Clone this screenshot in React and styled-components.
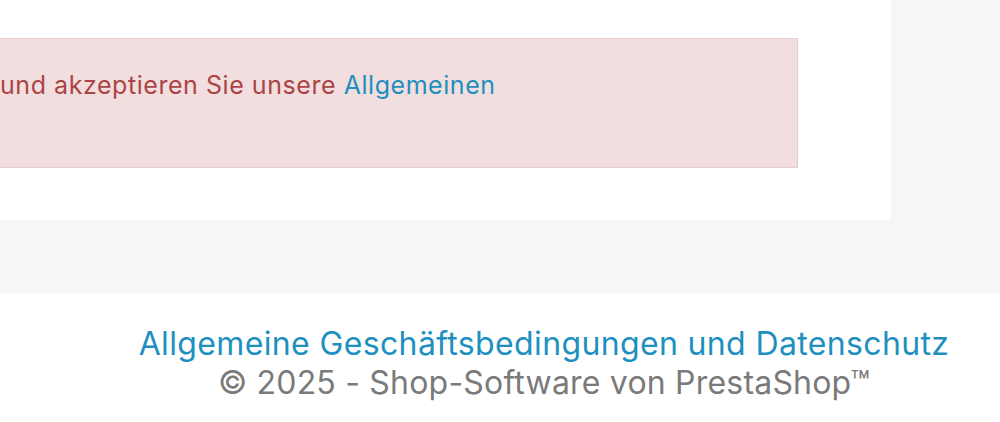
import React from 'react';
import styled, { createGlobalStyle } from 'styled-components';

const GlobalStyle = createGlobalStyle`
  html, body {
    margin: 0;
    padding: 0;
    background: #f6f6f6;
    font-family: Inter, 'Open Sans', sans-serif;
    overflow: hidden;
  }
`;

const Page = styled.div`
  width: 1000px;
  height: 422px;
  display: flex;
  flex-direction: column;
`;

const Wrapper = styled.div`
  height: 293px;
  background: #f6f6f6;
`;

const Panel = styled.section`
  width: 891px;
  height: 220px;
  background: #fff;
  padding-top: 38px;
  box-sizing: border-box;
`;

const Alert = styled.div`
  width: 798px;
  height: 130px;
  box-sizing: border-box;
  background: #f2dede;
  border: 1px solid #ebcccc;
  border-left: none;
  color: #ab4446;
  font-size: 25px;
  letter-spacing: 0.55px;
  line-height: 32px;
  padding-top: 30px;
  white-space: nowrap;
`;

const Link = styled.a`
  color: #1e90c0;
  text-decoration: none;
`;

const Footer = styled.footer`
  flex: 1;
  background: #fff;
  display: flex;
  flex-direction: column;
  align-items: center;
  padding: 31px 0 0 88px;
  box-sizing: border-box;
`;

const FooterLine = styled.p`
  margin: 0;
  font-size: 32px;
  line-height: 39px;
  letter-spacing: ${(props) => (props.muted ? '0.2px' : '0.36px')};
  color: ${(props) => (props.muted ? '#7a7a7a' : '#1e90c0')};
  white-space: nowrap;
`;

export default function App() {
  return (
    <Page>
      <GlobalStyle />
      <Wrapper>
        <Panel>
          <Alert>
            und akzeptieren Sie unsere <Link href="#">Allgemeinen</Link>
          </Alert>
        </Panel>
      </Wrapper>
      <Footer>
        <FooterLine>Allgemeine Geschäftsbedingungen und Datenschutz</FooterLine>
        <FooterLine muted>© 2025 - Shop-Software von PrestaShop™</FooterLine>
      </Footer>
    </Page>
  );
}
